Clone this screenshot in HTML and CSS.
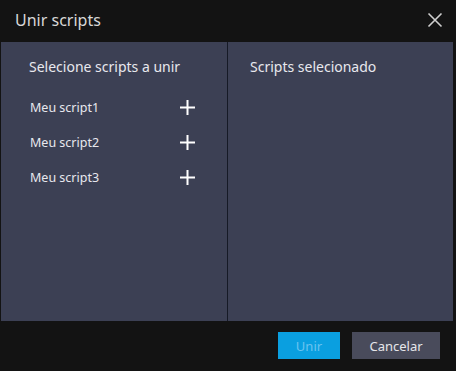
FILE: index.html
```html
<!DOCTYPE html>
<html>
<head>
<meta charset="utf-8">
<link rel="stylesheet" href="styles.css">
</head>
<body>
<div class="dialog">
  <div class="header">
    <div class="title">Unir scripts</div>
    <svg class="close" width="16" height="16" viewBox="0 0 16 16"><path d="M1.5 1.5 L14.5 14.5 M14.5 1.5 L1.5 14.5" stroke="#cfcfcf" stroke-width="1.6" fill="none"/></svg>
  </div>
  <div class="body">
    <div class="panel left">
      <div class="panel-title">Selecione scripts a unir</div>
      <div class="list">
        <div class="item"><span>Meu script1</span><svg class="plus" width="15" height="15" viewBox="0 0 15 15"><path d="M7.5 0 V15 M0 7.5 H15" stroke="#fff" stroke-width="2"/></svg></div>
        <div class="item"><span>Meu script2</span><svg class="plus" width="15" height="15" viewBox="0 0 15 15"><path d="M7.5 0 V15 M0 7.5 H15" stroke="#fff" stroke-width="2"/></svg></div>
        <div class="item"><span>Meu script3</span><svg class="plus" width="15" height="15" viewBox="0 0 15 15"><path d="M7.5 0 V15 M0 7.5 H15" stroke="#fff" stroke-width="2"/></svg></div>
      </div>
    </div>
    <div class="panel right">
      <div class="panel-title">Scripts selecionado</div>
    </div>
  </div>
  <div class="footer">
    <button class="btn primary">Unir</button>
    <button class="btn secondary">Cancelar</button>
  </div>
</div>
</body>
</html>
```
FILE: styles.css
```css
html, body {
  margin: 0;
  padding: 0;
  background: #131313;
}
.dialog {
  width: 456px;
  height: 371px;
  background: #131313;
  font-family: "Noto Sans", "Open Sans", sans-serif;
  display: flex;
  flex-direction: column;
}
.header {
  height: 42px;
  display: flex;
  align-items: center;
  justify-content: space-between;
  padding: 0 13px 0 15px;
  box-sizing: border-box;
}
.title {
  color: #d8d8d8;
  font-size: 16px;
  margin-top: -2px;
}
.close {
  display: block;
  margin-top: -2px;
}
.body {
  height: 279px;
  margin: 0 3px 0 1px;
  display: flex;
  gap: 1px;
  background: #161a26;
}
.panel {
  background: #3c4054;
  box-sizing: border-box;
}
.left {
  width: 226px;
  padding: 15px 32px 0 28px;
}
.right {
  flex: 1;
  padding: 15px 0 0 22px;
}
.panel-title {
  color: #e8e8ee;
  font-size: 14px;
  line-height: 20px;
}
.list {
  margin-top: 22px;
  display: flex;
  flex-direction: column;
  gap: 19px;
}
.item {
  display: flex;
  align-items: center;
  justify-content: space-between;
  height: 16px;
  padding-left: 1px;
  color: #e8e8ee;
  font-size: 12.5px;
}
.plus {
  display: block;
}
.footer {
  flex: 1;
  display: flex;
  justify-content: flex-end;
  align-items: flex-start;
  gap: 12px;
  padding: 11px 16px 0 0;
}
.btn {
  height: 27px;
  border: none;
  font-family: "Noto Sans", "Open Sans", sans-serif;
  font-size: 13px;
  padding: 0;
}
.primary {
  width: 62px;
  background: #0a9fe0;
  color: #6bc3ef;
}
.secondary {
  width: 88px;
  background: #494b5b;
  color: #e6e6ea;
}
```
